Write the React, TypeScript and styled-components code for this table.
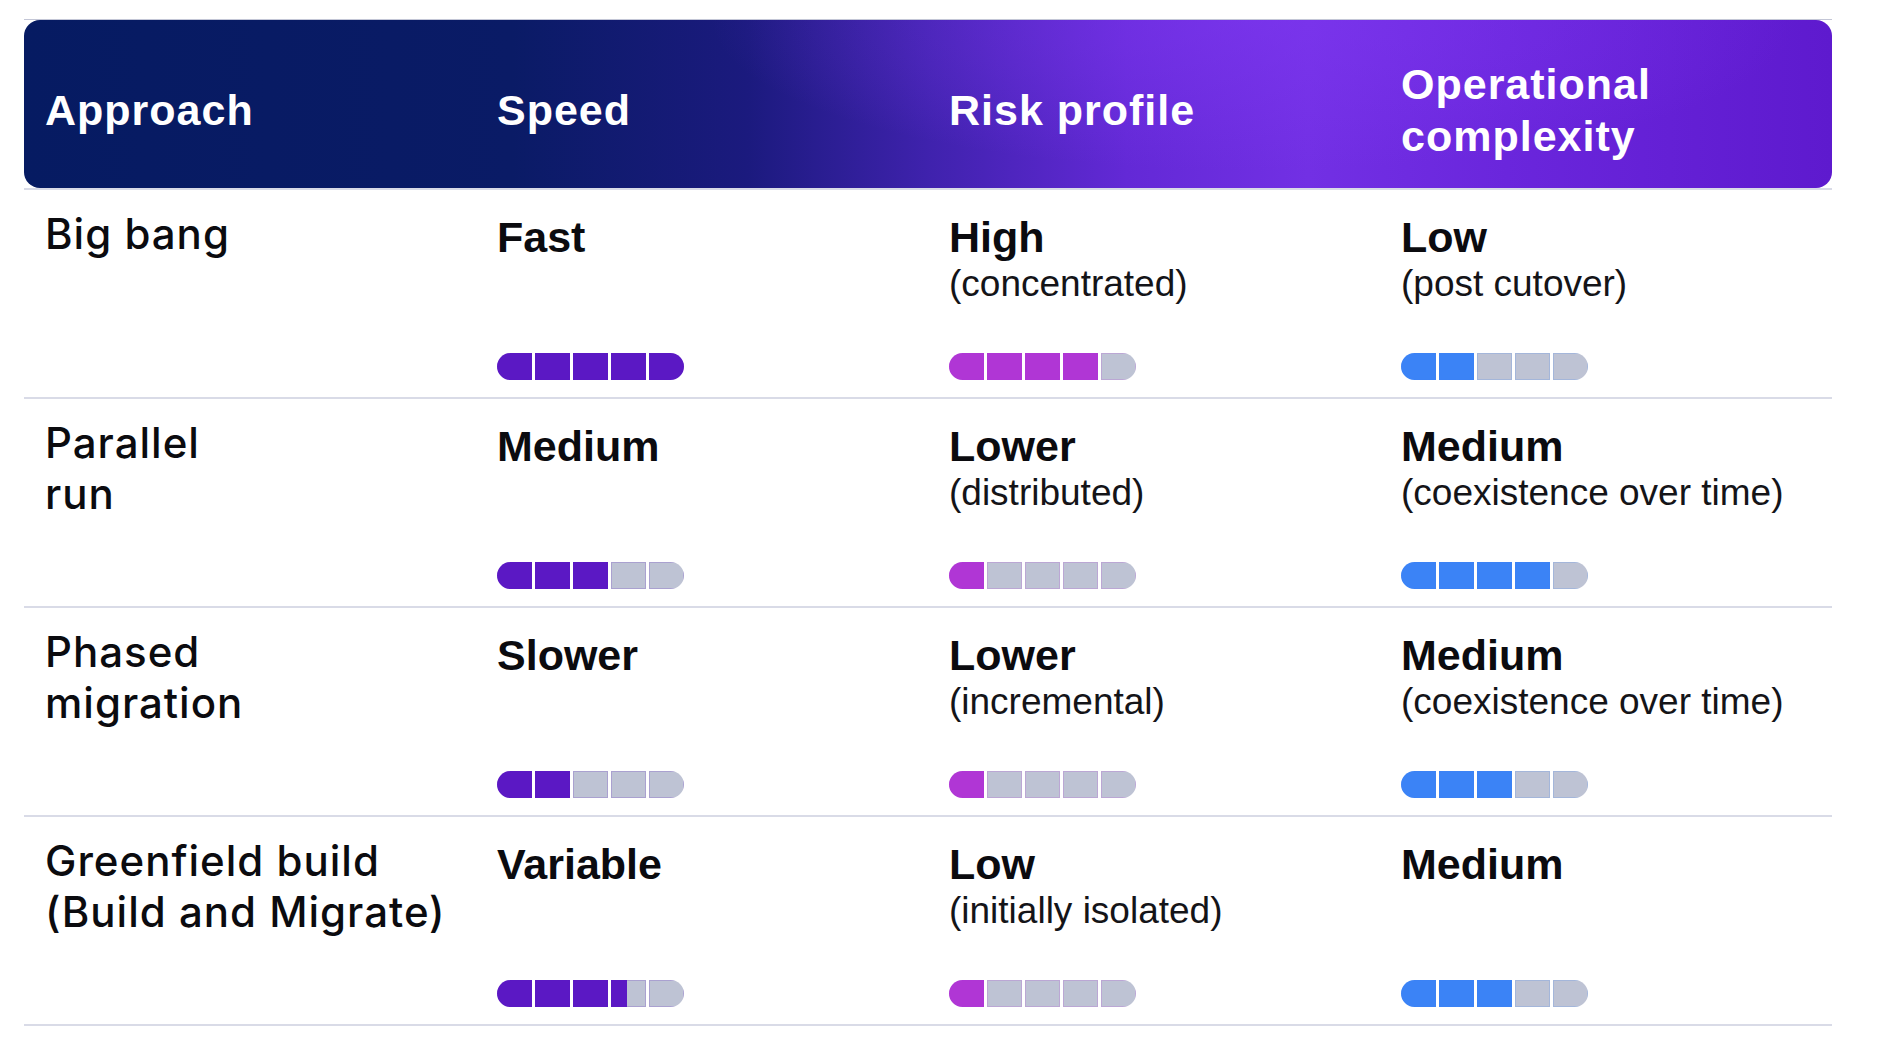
import React from "react";
import styled, { createGlobalStyle } from "styled-components";

const GlobalStyle = createGlobalStyle`
  html, body {
    margin: 0;
    padding: 0;
    background: #ffffff;
  }
  body {
    font-family: "Liberation Sans", Arial, sans-serif;
    color: #0b0b0f;
  }
`;

type Metric = { label: string; sub?: string; value: number };
type Row = { approach: string[]; speed: Metric; risk: Metric; ops: Metric };

const rows: Row[] = [
  {
    approach: ["Big bang"],
    speed: { label: "Fast", value: 5 },
    risk: { label: "High", sub: "(concentrated)", value: 4 },
    ops: { label: "Low", sub: "(post cutover)", value: 2 },
  },
  {
    approach: ["Parallel", "run"],
    speed: { label: "Medium", value: 3 },
    risk: { label: "Lower", sub: "(distributed)", value: 1 },
    ops: { label: "Medium", sub: "(coexistence over time)", value: 4 },
  },
  {
    approach: ["Phased", "migration"],
    speed: { label: "Slower", value: 2 },
    risk: { label: "Lower", sub: "(incremental)", value: 1 },
    ops: { label: "Medium", sub: "(coexistence over time)", value: 3 },
  },
  {
    approach: ["Greenfield build", "(Build and Migrate)"],
    speed: { label: "Variable", value: 3.45 },
    risk: { label: "Low", sub: "(initially isolated)", value: 1 },
    ops: { label: "Medium", value: 3 },
  },
];

const COLORS = {
  speed: "#5b18c4",
  risk: "#b036d5",
  ops: "#3b83f6",
};
const TRACK = "#bec3d4";

const Page = styled.div`
  padding: 19px 58px 0 24px;
`;

const Table = styled.div`
  width: 1808px;
  display: flex;
  flex-direction: column;
`;

const HeaderWrap = styled.div`
  border-top: 1px solid #c3c6d6;
  border-bottom: 2px solid #d9dbe7;
`;

const Header = styled.div`
  display: grid;
  grid-template-columns: repeat(4, 452px);
  align-items: center;
  height: 168px;
  box-sizing: border-box;
  padding-top: 11px;
  border-radius: 16px;
  background:
    radial-gradient(ellipse 30% 90% at 68% 0%, rgba(128, 56, 242, 0.55), rgba(128, 56, 242, 0) 100%),
    linear-gradient(90deg, #061b62 0%, #0a1b66 27%, #1b1a7e 40%, #3f22ad 50%, #6329d6 61%, #7230e4 71%, #6a26dc 82%, #5e1ace 100%);
`;

const HeaderCell = styled.div`
  padding-left: 21px;
  font-family: "Liberation Sans", Arial, sans-serif;
  font-weight: 700;
  font-size: 43px;
  line-height: 52px;
  letter-spacing: 1px;
  color: #ffffff;
`;

const BodyRow = styled.div`
  display: grid;
  grid-template-columns: repeat(4, 452px);
  height: 209px;
  box-sizing: border-box;
  border-bottom: 2px solid #d9dbe7;
  padding: 20px 0 17px;
`;

const ApproachCell = styled.div`
  margin-top: -2px;
  padding-left: 21px;
  font-family: Inter, "Liberation Sans", sans-serif;
  font-weight: 500;
  font-size: 42px;
  line-height: 51px;
  letter-spacing: 1px;
  color: #0b0b0f;
`;

const ValueCell = styled.div`
  padding-left: 21px;
  display: flex;
  flex-direction: column;
`;

const ValueLabel = styled.div`
  margin-top: 5px;
  font-family: "Liberation Sans", Arial, sans-serif;
  font-weight: 700;
  font-size: 43px;
  line-height: 45px;
  color: #0b0b0f;
`;

const ValueSub = styled.div`
  margin-top: 4px;
  font-family: "Liberation Sans", Arial, sans-serif;
  font-weight: 400;
  font-size: 37px;
  line-height: 40px;
  color: #141418;
`;

const Bar = styled.div`
  margin-top: auto;
  display: flex;
  gap: 3px;
  width: 187px;
  height: 27px;
  border-radius: 14px;
  overflow: hidden;
`;

const Segment = styled.div<{ $color: string; $fill: number }>`
  flex: 0 0 35px;
  height: 100%;
  background: linear-gradient(
    90deg,
    ${(p) => p.$color} 0%,
    ${(p) => p.$color} ${(p) => p.$fill * 100}%,
    ${TRACK} ${(p) => p.$fill * 100}%,
    ${TRACK} 100%
  );
  box-shadow: inset 0 0 0 1px ${(p) => p.$color}33;
`;

function Meter({ value, color }: { value: number; color: string }) {
  return (
    <Bar>
      {[0, 1, 2, 3, 4].map((i) => {
        const fill = Math.max(0, Math.min(1, value - i));
        return <Segment key={i} $color={color} $fill={fill} />;
      })}
    </Bar>
  );
}

function Value({ metric, color }: { metric: Metric; color: string }) {
  return (
    <ValueCell>
      <ValueLabel>{metric.label}</ValueLabel>
      {metric.sub && <ValueSub>{metric.sub}</ValueSub>}
      <Meter value={metric.value} color={color} />
    </ValueCell>
  );
}

export default function App() {
  return (
    <>
      <GlobalStyle />
      <Page>
        <Table>
          <HeaderWrap>
            <Header>
              <HeaderCell>Approach</HeaderCell>
              <HeaderCell>Speed</HeaderCell>
              <HeaderCell>Risk profile</HeaderCell>
              <HeaderCell>
                Operational
                <br />
                complexity
              </HeaderCell>
            </Header>
          </HeaderWrap>
          {rows.map((r, idx) => (
            <BodyRow key={idx}>
              <ApproachCell>
                {r.approach.map((line, i) => (
                  <React.Fragment key={i}>
                    {i > 0 && <br />}
                    {line}
                  </React.Fragment>
                ))}
              </ApproachCell>
              <Value metric={r.speed} color={COLORS.speed} />
              <Value metric={r.risk} color={COLORS.risk} />
              <Value metric={r.ops} color={COLORS.ops} />
            </BodyRow>
          ))}
        </Table>
      </Page>
    </>
  );
}
